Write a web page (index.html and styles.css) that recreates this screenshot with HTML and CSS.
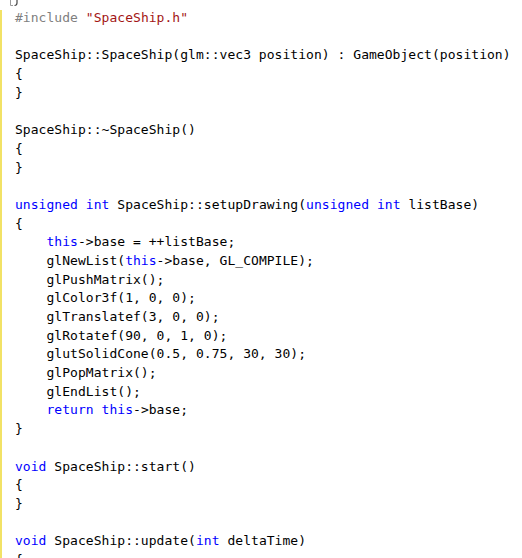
FILE: index.html
```html
<!DOCTYPE html>
<html>
<head>
<meta charset="utf-8">
<link rel="stylesheet" href="styles.css">
</head>
<body>
<div class="editor">
  <svg class="marker" width="24" height="10" viewBox="0 0 24 10"><path d="M10.5 0 V5.5 H13" fill="none" stroke="#9a9a9a" stroke-width="1"/><path d="M17 0 V3 Q17 5.5 14.5 5.5" fill="none" stroke="#444" stroke-width="1.2"/></svg>
  <div class="gutter"></div>
<pre class="code"><span class="pp">#include</span> <span class="str">"SpaceShip.h"</span>

SpaceShip::SpaceShip(glm::vec3 position) : GameObject(position)
{
}

SpaceShip::~SpaceShip()
{
}

<span class="kw">unsigned</span> <span class="kw">int</span> SpaceShip::setupDrawing(<span class="kw">unsigned</span> <span class="kw">int</span> listBase)
{
    <span class="kw">this</span>-&gt;base = ++listBase;
    glNewList(<span class="kw">this</span>-&gt;base, GL_COMPILE);
    glPushMatrix();
    glColor3f(1, 0, 0);
    glTranslatef(3, 0, 0);
    glRotatef(90, 0, 1, 0);
    glutSolidCone(0.5, 0.75, 30, 30);
    glPopMatrix();
    glEndList();
    <span class="kw">return</span> <span class="kw">this</span>-&gt;base;
}

<span class="kw">void</span> SpaceShip::start()
{
}

<span class="kw">void</span> SpaceShip::update(<span class="kw">int</span> deltaTime)
{
</pre>
</div>
</body>
</html>
```
FILE: styles.css
```css
html, body {
  margin: 0;
  padding: 0;
  background: #ffffff;
  overflow: hidden;
}
.editor {
  position: relative;
  width: 522px;
  height: 558px;
  overflow: hidden;
  background: #ffffff;
  display: flex;
}
.marker {
  position: absolute;
  left: 0;
  top: 0;
}
.gutter {
  flex: 0 0 2px;
  margin-top: 10px;
  background: #f2e266;
}
.code {
  margin: 0;
  padding: 9px 0 0 13px;
  font-family: "DejaVu Sans Mono", "Liberation Mono", monospace;
  font-size: 13px;
  letter-spacing: 0.04px;
  line-height: 18.68px;
  color: #000000;
  white-space: pre;
}
.kw { color: #0000ff; }
.pp { color: #808080; }
.str { color: #a31515; }
```
